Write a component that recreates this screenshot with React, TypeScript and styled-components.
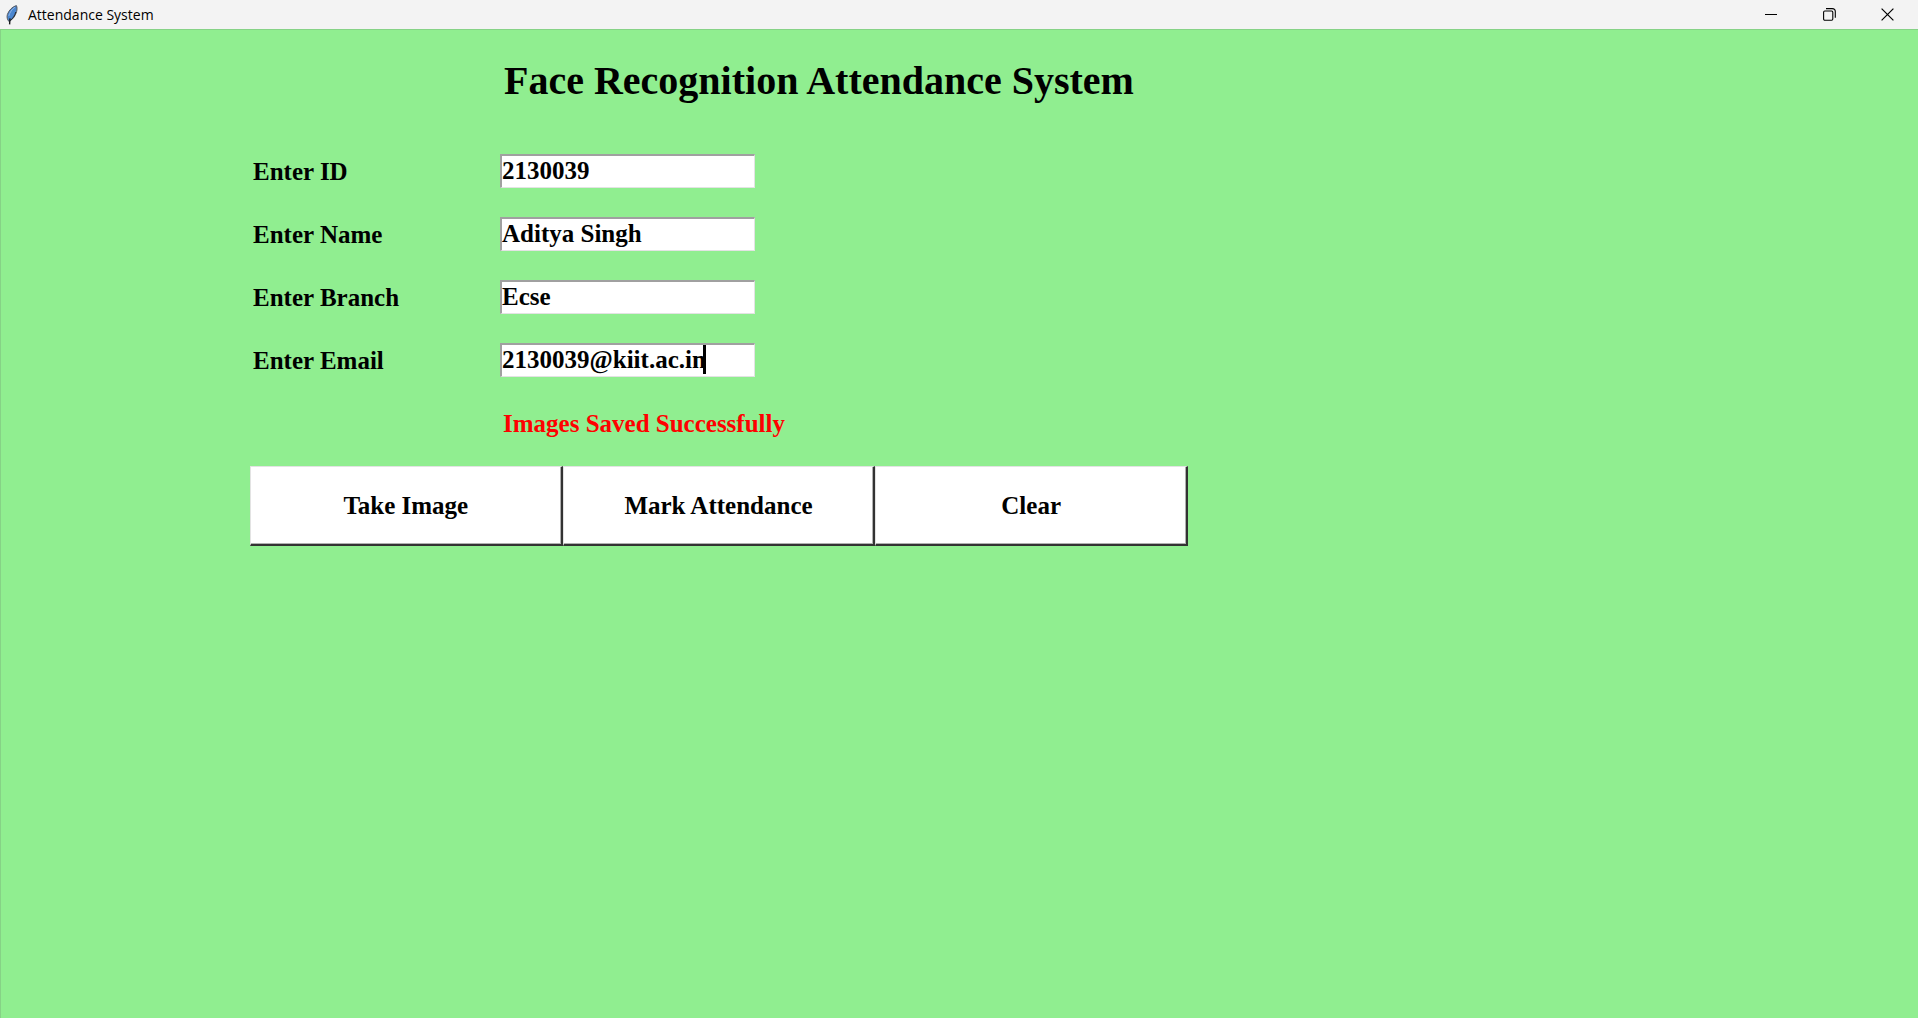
import React, { useState } from "react";
import styled, { createGlobalStyle } from "styled-components";

const GlobalStyle = createGlobalStyle`
  *, *::before, *::after { box-sizing: border-box; }
  body { margin: 0; background: #90ee90; }
`;

const serif = `"Liberation Serif", "Times New Roman", serif`;

const AppWindow = styled.div`
  display: flex;
  flex-direction: column;
  min-height: 100vh;
  background: #90ee90;
  color: #000;
  font-family: ${serif};
`;

const TitleBar = styled.header`
  display: flex;
  align-items: center;
  height: 29px;
  padding: 0 2px 0 6px;
  background: #f3f3f3;
  font-family: "Open Sans", "Segoe UI", sans-serif;
`;

const WindowTitle = styled.span`
  flex: 1;
  padding-left: 10px;
  font-size: 14px;
  line-height: 28px;
`;

const WindowButton = styled.button`
  display: flex;
  align-items: center;
  justify-content: center;
  width: 58px;
  height: 28px;
  padding: 0;
  border: 0;
  background: transparent;
`;

const Content = styled.main`
  flex: 1;
  padding: 27px 20px 27px 249px;
  border-top: 1px solid #86d286;
  border-left: 1px solid #86d286;
`;

const Heading = styled.h1`
  margin: 0 0 49px 254px;
  font-size: 40px;
  line-height: 48px;
  font-weight: bold;
`;

const Form = styled.form`
  max-width: 938px;
`;

const Fields = styled.div`
  display: grid;
  grid-template-columns: 250px 1fr;
  row-gap: 29px;
  align-items: center;
`;

const Label = styled.label`
  padding: 2px 0 0 3px;
  font-size: 25px;
  line-height: 32px;
  font-weight: bold;
`;

const InputBox = styled.div`
  position: relative;
  width: 255px;
`;

const Input = styled.input`
  display: block;
  width: 100%;
  height: 34px;
  padding: 0 0 2px;
  border: 2px solid;
  border-width: 2px 1px 1px 2px;
  border-color: #a0a0a0 #e3e3e3 #e3e3e3 #a0a0a0;
  border-radius: 0;
  outline: 0;
  background: #fff;
  color: #000;
  font: bold 25px / 29px ${serif};
`;

const Caret = styled.span`
  position: absolute;
  top: 2px;
  left: 203px;
  width: 3px;
  height: 29px;
  background: #000;
`;

const Status = styled.output`
  grid-column: 2;
  padding: 2px 0 0 3px;
  color: #f00;
  font-size: 25px;
  line-height: 32px;
  font-weight: bold;
`;

const Actions = styled.div`
  display: grid;
  grid-template-columns: repeat(3, 1fr);
  margin-top: 26px;
`;

const ActionButton = styled.button`
  height: 80px;
  padding: 0;
  border: 2px solid;
  border-width: 1px 2px 2px 1px;
  border-color: #e3e3e3 #333 #333 #e3e3e3;
  border-radius: 0;
  background: #fff;
  box-shadow: inset -1px -1px #b0b0b0;
  color: #000;
  font: bold 25px / 32px ${serif};
`;

const Feather = () => (
  <svg width="12" height="20" viewBox="0 0 12 20" aria-hidden="true">
    <path d="M10.4 0.6C6.6 1.6 3 5 1.4 9.4C0.6 12.2 1.2 14.4 3 16.6C6.8 14.6 9.4 10.8 10.6 6.6C11.2 4.4 11.2 2.2 10.4 0.6Z" fill="#4a86cf" stroke="#55585f" strokeWidth="1" />
    <path d="M9 2.2C6 4.2 3.8 7.2 2.8 11" fill="none" stroke="#8db4e6" strokeWidth="1" />
    <path d="M9.8 7C8.8 10.6 7 13.4 4.4 15.4" fill="none" stroke="#23262c" strokeWidth="1" />
    <path d="M4 13.4L3.6 19.4" fill="none" stroke="#16181c" strokeWidth="1.4" />
  </svg>
);

const fields = [
  { id: "id", label: "Enter ID", value: "2130039" },
  { id: "name", label: "Enter Name", value: "Aditya Singh" },
  { id: "branch", label: "Enter Branch", value: "Ecse" },
  { id: "email", label: "Enter Email", value: "2130039@kiit.ac.in", active: true },
];

export default function App() {
  const [values, setValues] = useState<Record<string, string>>(
    Object.fromEntries(fields.map((f) => [f.id, f.value]))
  );

  return (
    <AppWindow>
      <GlobalStyle />
      <TitleBar>
        <Feather />
        <WindowTitle>Attendance System</WindowTitle>
        <WindowButton aria-label="Minimize">
          <svg width="12" height="12" viewBox="0 0 12 12">
            <path d="M0 5.5H12" stroke="#000" />
          </svg>
        </WindowButton>
        <WindowButton aria-label="Restore">
          <svg width="13" height="13" viewBox="0 0 13 13" fill="none" stroke="#000" strokeWidth="1.1">
            <rect x="0.6" y="3" width="9.2" height="9.2" rx="1.2" />
            <path d="M3 0.6H9.2Q12.3 0.6 12.3 3.6V9.8" />
          </svg>
        </WindowButton>
        <WindowButton aria-label="Close">
          <svg width="13" height="13" viewBox="0 0 13 13">
            <path d="M0.6 0.6L12.4 12.4M12.4 0.6L0.6 12.4" stroke="#000" strokeWidth="1.2" />
          </svg>
        </WindowButton>
      </TitleBar>
      <Content>
        <Heading>Face Recognition Attendance System</Heading>
        <Form onSubmit={(e) => e.preventDefault()}>
          <Fields>
            {fields.map((f) => (
              <React.Fragment key={f.id}>
                <Label htmlFor={f.id}>{f.label}</Label>
                <InputBox>
                  <Input
                    id={f.id}
                    value={values[f.id]}
                    onChange={(e) => setValues({ ...values, [f.id]: e.target.value })}
                  />
                  {f.active && <Caret />}
                </InputBox>
              </React.Fragment>
            ))}
            <Status>Images Saved Successfully</Status>
          </Fields>
          <Actions>
            <ActionButton type="button">Take Image</ActionButton>
            <ActionButton type="button">Mark Attendance</ActionButton>
            <ActionButton type="button">Clear</ActionButton>
          </Actions>
        </Form>
      </Content>
    </AppWindow>
  );
}
